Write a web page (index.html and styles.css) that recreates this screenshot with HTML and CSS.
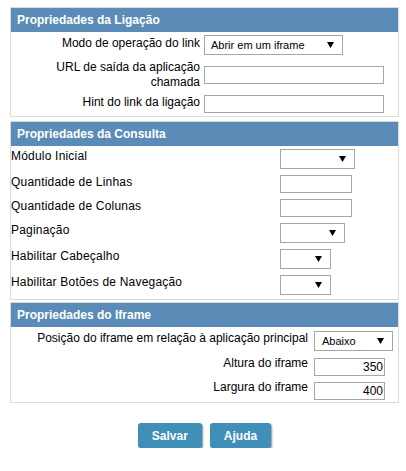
FILE: index.html
```html
<!DOCTYPE html>
<html lang="pt-BR">
<head>
<meta charset="utf-8">
<title>Propriedades</title>
<link rel="stylesheet" href="styles.css">
</head>
<body>
<div class="page">
  <section class="panel panel-link">
    <h2 class="panel-title">Propriedades da Ligação</h2>
    <div class="link-body">
      <div class="link-row row-a">
        <label class="lbl-right">Modo de operação do link</label>
        <div class="select sel-mode"><span>Abrir em um iframe</span><svg class="arrow" width="7" height="6" viewBox="0 0 7 6"><polygon points="0,0 7,0 3.5,6"/></svg></div>
      </div>
      <div class="link-row row-b">
        <label class="lbl-right lbl-two">URL de saída da aplicação chamada</label>
        <input class="field field-wide" type="text">
      </div>
      <div class="link-row row-c">
        <label class="lbl-right">Hint do link da ligação</label>
        <input class="field field-wide" type="text">
      </div>
    </div>
  </section>

  <section class="panel panel-query">
    <h2 class="panel-title">Propriedades da Consulta</h2>
    <div class="query-body">
      <label class="lbl-left">Módulo Inicial</label>
      <div class="select sel-75"><span></span><svg class="arrow" width="7" height="6" viewBox="0 0 7 6"><polygon points="0,0 7,0 3.5,6"/></svg></div>
      <label class="lbl-left">Quantidade de Linhas</label>
      <input class="field field-72" type="text">
      <label class="lbl-left">Quantidade de Colunas</label>
      <input class="field field-72" type="text">
      <label class="lbl-left">Paginação</label>
      <div class="select sel-65"><span></span><svg class="arrow" width="7" height="6" viewBox="0 0 7 6"><polygon points="0,0 7,0 3.5,6"/></svg></div>
      <label class="lbl-left">Habilitar Cabeçalho</label>
      <div class="select sel-51"><span></span><svg class="arrow" width="7" height="6" viewBox="0 0 7 6"><polygon points="0,0 7,0 3.5,6"/></svg></div>
      <label class="lbl-left">Habilitar Botões de Navegação</label>
      <div class="select sel-51"><span></span><svg class="arrow" width="7" height="6" viewBox="0 0 7 6"><polygon points="0,0 7,0 3.5,6"/></svg></div>
    </div>
  </section>

  <section class="panel panel-iframe">
    <h2 class="panel-title">Propriedades do Iframe</h2>
    <div class="iframe-body">
      <div class="iframe-row row-pos">
        <label class="lbl-right lbl-wide">Posição do iframe em relação à aplicação principal</label>
        <div class="select sel-79"><span>Abaixo</span><svg class="arrow" width="7" height="6" viewBox="0 0 7 6"><polygon points="0,0 7,0 3.5,6"/></svg></div>
      </div>
      <div class="iframe-row row-h">
        <label class="lbl-right lbl-wide">Altura do iframe</label>
        <input class="field field-71 num" type="text" value="350">
      </div>
      <div class="iframe-row row-w">
        <label class="lbl-right lbl-wide">Largura do iframe</label>
        <input class="field field-71 num" type="text" value="400">
      </div>
    </div>
  </section>

  <div class="actions">
    <button class="btn" type="button">Salvar</button>
    <button class="btn" type="button">Ajuda</button>
  </div>
</div>
</body>
</html>
```
FILE: styles.css
```css
* { box-sizing: border-box; }

body {
  margin: 0;
  background: #fff;
  color: #000;
  font-family: "Liberation Sans", Arial, sans-serif;
  font-size: 12px;
}

.page {
  padding: 7px 0 0 10px;
  width: 399px;
}

.panel {
  border: 1px solid #dadada;
}

.panel-query { margin-top: 4px; }
.panel-iframe { margin-top: 2px; }

.panel-title {
  margin: 0;
  height: 24px;
  line-height: 24px;
  padding-left: 6px;
  background: #5a8cb7;
  color: #fff;
  font-size: 12px;
  font-weight: bold;
}

label {
  line-height: 14px;
}

.lbl-right { text-align: right; }
.lbl-left { letter-spacing: 0.2px; }

/* panel 1 */
.link-row {
  display: flex;
  align-items: center;
}
.row-a { height: 25px; }
.row-b { height: 35px; }
.row-c { height: 24px; }

.link-row .lbl-right {
  width: 189px;
  margin-right: 4px;
  margin-bottom: 4px;
  flex: none;
}
.link-row .lbl-two {
  line-height: 15px;
  margin-bottom: 0;
}

/* controls */
.select {
  display: flex;
  align-items: center;
  justify-content: space-between;
  height: 20px;
  padding: 0 8px 0 6px;
  border: 1px solid #a6a6a6;
  background: #fff;
  font-size: 11px;
  flex: none;
}
.arrow { display: block; fill: #000; }

.sel-mode { width: 139px; }
.sel-75 { width: 75px; }
.sel-65 { width: 65px; }
.sel-51 { width: 51px; }
.sel-79 { width: 79px; padding-left: 7px; }

.field {
  display: block;
  height: 18px;
  margin: 0;
  padding: 0 2px;
  border: 1px solid #a6a6a6;
  background: #fff;
  font-family: "Liberation Sans", Arial, sans-serif;
  font-size: 12px;
  color: #000;
  outline: none;
  flex: none;
}
.field-wide { width: 180px; }
.field-72 { width: 72px; }
.field-71 { width: 71px; }
.num { text-align: right; padding-right: 1px; }

/* panel 2 */
.query-body {
  display: grid;
  grid-template-columns: 269px auto;
  justify-content: start;
  align-items: start;
  row-gap: 6px;
  padding: 3px 0 4px;
}

/* panel 3 */
.iframe-body {
  padding: 4px 0 2px;
}
.iframe-row {
  display: flex;
  align-items: flex-start;
}
.lbl-wide {
  width: 297px;
  margin-right: 6px;
  flex: none;
}
.row-pos { padding-bottom: 5px; }
.row-h { padding-bottom: 4px; }
.iframe-row .field { margin-top: 2px; }

/* buttons */
.actions {
  display: flex;
  justify-content: center;
  gap: 8px;
  width: 389px;
  margin-top: 20px;
}
.btn {
  height: 25px;
  padding: 0 14px;
  border: none;
  border-radius: 3px;
  background: #3f8fb9;
  color: #fff;
  font-family: "Liberation Sans", Arial, sans-serif;
  font-size: 12px;
  font-weight: bold;
  box-shadow: 1px 1px 2px rgba(0, 0, 0, 0.45);
}
```
